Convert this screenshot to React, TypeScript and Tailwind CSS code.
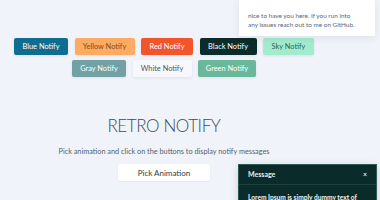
import React from 'react'

const row1 = [
    { label: 'Blue Notify', w: 'w-[54px]', cls: 'bg-[#0f6e8f] text-white' },
    { label: 'Yellow Notify', w: 'w-[60px]', cls: 'bg-[#fdab62] text-[#7a4f24]' },
    { label: 'Red Notify', w: 'w-[52px]', cls: 'bg-[#f1552b] text-white' },
    { label: 'Black Notify', w: 'w-[57px]', cls: 'bg-[#0c2b2b] text-white' },
    { label: 'Sky Notify', w: 'w-[51px]', cls: 'bg-[#a2ebcd] text-[#2d6456]' },
]

const row2 = [
    { label: 'Gray Notify', w: 'w-[54px]', cls: 'bg-[#71a0a5] text-white' },
    { label: 'White Notify', w: 'w-[59px]', cls: 'bg-[#f7f8fb] text-[#4b5563]' },
    { label: 'Green Notify', w: 'w-[58px]', cls: 'bg-[#6ab89b] text-white' },
]

function NotifyButton({ label, w, cls }: { label: string; w: string; cls: string }) {
    return (
        <button className={`${w} h-[17px] rounded-[2px] text-[7.4px] leading-none shadow-[0_1px_3px_rgba(0,0,0,0.08)] ${cls}`}>
            {label}
        </button>
    )
}

export default function App() {
    return (
        <div className="relative w-[380px] h-[200px] overflow-hidden bg-[#f0f3f9] font-['Lato','Open_Sans',sans-serif]">
            <div className="w-[328px] flex flex-col items-center pt-[38px]">
                <div className="flex gap-[6.5px]">
                    {row1.map((b) => (
                        <NotifyButton key={b.label} {...b} />
                    ))}
                </div>
                <div className="flex gap-[6.5px] mt-[5px]">
                    {row2.map((b) => (
                        <NotifyButton key={b.label} {...b} />
                    ))}
                </div>

                <h1 className="mt-[37px] text-[17px] leading-[24px] font-light tracking-[-0.4px] text-[#3f4a54]">
                    RETRO NOTIFY
                </h1>
                <p className="mt-[9px] text-[7.3px] leading-[9px] text-[#555f6b]">
                    Pick animation and click on the buttons to display notify messages
                </p>
                <button className="mt-[8px] w-[92px] h-[17px] rounded-[3px] bg-white text-[8px] leading-none text-[#333b44] shadow-[0_1px_2px_rgba(0,0,0,0.05)]">
                    Pick Animation
                </button>
            </div>

            {/* top right notification, scrolled off the top */}
            <div className="absolute right-[5px] top-0 w-[136px] h-[36px] bg-white shadow-[0_2px_8px_rgba(0,0,0,0.08)] px-[9px] pt-[11px]">
                <p className="text-[6.4px] leading-[9px] text-[#5b6470]">
                    nice to have you here. If you run into
                    <br />
                    any issues reach out to me on GitHub.
                </p>
            </div>

            {/* bottom right notification */}
            <div className="absolute left-[238px] top-[164px] w-[139px] h-[60px] bg-[#0b2b2b] border border-[#2c5a57] shadow-[0_2px_8px_rgba(0,0,0,0.15)]">
                <div className="flex items-center justify-between px-[9px] h-[19px]">
                    <span className="text-[7px] font-bold text-[#e6eeee]">Message</span>
                    <span className="text-[7px] font-bold text-[#d6e2e2] leading-none">×</span>
                </div>
                <div className="border-t border-[#1d4241] px-[9px] pt-[8px]">
                    <p className="text-[6.6px] font-bold text-[#eef4f4] leading-[9px]">
                        Lorem Ipsum is simply dummy text of
                    </p>
                </div>
            </div>
        </div>
    )
}
